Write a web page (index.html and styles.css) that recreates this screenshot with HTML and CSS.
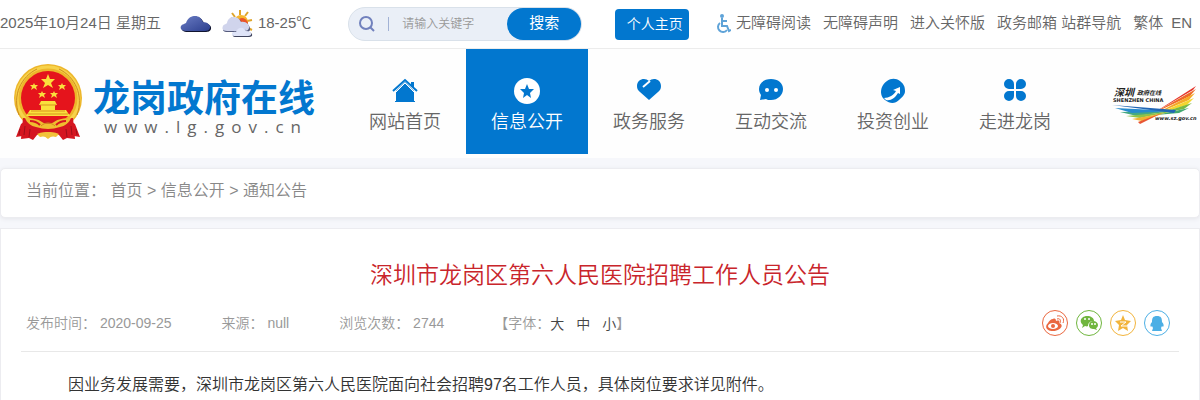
FILE: index.html
```html
<!DOCTYPE html>
<html lang="zh-CN">
<head>
    <meta charset="UTF-8">
    <meta name="viewport" content="width=device-width, initial-scale=1.0">
    <title>深圳市龙岗区第六人民医院招聘工作人员公告</title>
    <link rel="stylesheet" href="styles.css">
</head>
<body>
<!-- Top bar -->
<div class="topbar">
    <div class="date">2025年10月24日 星期五</div>
    <div class="weather">
        <svg class="cloud" width="32" height="18" viewBox="0 0 32 18">
            <defs>
                <linearGradient id="dark" x1="0" y1="0" x2="1" y2="1">
                    <stop offset="0" stop-color="#6a7cc4"/>
                    <stop offset="1" stop-color="#2c3f8e"/>
                </linearGradient>
            </defs>
            <path d="M8 17C3 17 1 15 2 12C3 10 6 10 7 9C9 3 12 2 16 2C20 2 22 4 24 8C28 8 32 11 31 14C30 17 27 17 24 17Z" fill="#10142f"/>
            <path d="M6 16C1 16 0 13 1 11C2 9 5 9 6 8C8 2 12 1 15 1C19 1 21 3 23 7C27 7 31 10 30 13C29 16 26 16 23 16Z" fill="url(#dark)"/>
        </svg>
        <svg width="32" height="30" viewBox="0 0 32 30">
            <g stroke="#dfa52c" stroke-width="2">
                <path d="M18 1v5M10 4l3 4M26 3l-3 4M30 11l-5 1M9 9l3 2M26 19l4 2"/>
            </g>
            <circle cx="19" cy="13" r="7" fill="#f7b52c"/>
            <path d="M17 10a6 6 0 0 1 9 6l-6 0z" fill="#e8542a"/>
            <path d="M6 23C1 23 0 21 2 18C3 16 6 16 6 15C7 10 10 9 13 9C17 9 19 12 20 14C25 13 28 17 28 20C28 23 26 23 23 23Z" fill="#555b7c"/>
            <path d="M5 22C0 22 0 19 1 17C2 15 5 15 5 14C6 9 9 8 12 8C16 8 18 11 19 13C24 12 28 16 27 19C26 22 24 22 22 22Z" fill="#d0d4ec"/>
            <path d="M13 28C9 28 11 23 15 24C17 18 24 19 25 23C31 23 32 28 27 28Z" fill="#40455f"/>
            <path d="M12 27C8 26 10 22 14 23C16 17 23 18 24 22C30 22 31 27 26 27Z" fill="#dfe4f8"/>
        </svg>
        <span>18-25℃</span>
    </div>
    <form class="search">
        <svg width="16" height="16" viewBox="0 0 16 16" fill="none" stroke="#7181bd" stroke-width="2">
            <circle cx="7" cy="7" r="6"/>
            <path d="M11 11l4 4"/>
        </svg>
        <input type="text" aria-label="请输入关键字" placeholder="请输入关键字">
        <button type="submit">搜索</button>
    </form>
    <button class="personal" type="button">个人主页</button>
    <div class="toplinks">
        <a class="access" href="#read">
            <svg width="15" height="20" viewBox="0 0 15 20" fill="none" stroke="#5fa3d8" stroke-width="2">
                <circle cx="6" cy="2" r="2" fill="#5fa3d8" stroke="none"/>
                <path d="M6 4v8h5l2 5 2-1M6 7h5"/>
                <path d="M4 9a5 5 0 1 0 7 7"/>
            </svg>无障碍阅读</a>
        <a href="#statement">无障碍声明</a>
        <a href="#care">进入关怀版</a>
        <span class="pair"><a href="#mail">政务邮箱</a> <a href="#sites">站群导航</a></span>
        <span class="lang"><a href="#hant">繁体</a><a href="#en">EN</a></span>
    </div>
</div>

<!-- Header -->
<div class="header">
    <a class="logo" href="#home">
        <svg width="70" height="76" viewBox="0 0 70 76">
            <circle cx="35" cy="34" r="34" fill="#edb62b"/>
            <circle cx="35" cy="34" r="31" fill="none" stroke="#f7d24a" stroke-width="3"/>
            <path d="M6 51C-1 31 8 13 24 5M64 51C71 31 62 13 46 5" fill="none" stroke="#ce8d1e" stroke-width="1"/>
            <circle cx="35" cy="34" r="27" fill="#e5141c"/>
            <g fill="#fae03c">
                <path d="M35 10l2 5h5l-4 4 2 5-5-3-5 3 2-5-4-4h5z"/>
                <path id="star" d="M21 19l1 2h3l-2 2 1 3-3-2-3 2 1-3-2-2h3z"/>
                <use href="#star" x="28"/>
                <use href="#star" x="8" y="8"/>
                <use href="#star" x="20" y="8"/>
                <path d="M26 41l2-4h14l2 4h-2v5h11l4 6H13l4-6h11v-5z"/>
            </g>
            <path d="M27 41h16M18 47h34M15 50h40" stroke="#d9941e" stroke-width="1"/>
            <path d="M10 54l14 1 11 2 11-2 14-1 2 21-8-1-4 2-4-5H24l-4 5-4-2-8 1z" fill="#d51620"/>
            <path d="M8 60L3 73l6-1 4 2 1-18zM62 60l5 13-6-1-4 2-1-18z" fill="#d51620"/>
            <path d="M12 54c7 0 13 1 17 4 3 2 9 2 12 0 4-3 10-4 17-4-2 5-6 8-11 9-4 1-8 2-12 2s-8-1-12-2c-5-1-9-4-11-9z" fill="#f0bd30"/>
            <path d="M17 57c5 0 8 2 10 4M53 57c-5 0-8 2-10 4" fill="none" stroke="#d51620" stroke-width="2"/>
            <path d="M24 70c5-2 8-2 11-2s6 0 11 2l-3 3c-3-1-5-1-8 2-3-3-5-3-8-2z" fill="#f2c33a"/>
            <path d="M28 62c4-4 10-4 14 0" fill="none" stroke="#cf8b1c" stroke-width="1"/>
            <path d="M12 62l-1 9M17 65l-1 8M53 65l1 8M58 62l1 9M7 65l-1 6M63 65l1 6" stroke="#9f0f19" stroke-width="1"/>
        </svg>
        <span class="logo-text">
            <span class="logo-name">龙岗政府在线</span>
            <span class="logo-url">www.lg.gov.cn</span>
        </span>
    </a>
    <nav class="nav">
        <a href="#index">
            <svg width="26" height="26" viewBox="0 0 26 26">
                <path d="M4 13l9-9 9 9v10h1v1H3v-1h1z" fill="#0277cf"/>
                <path d="M19 4h3v6l-3-3z" fill="#0277cf"/>
                <path d="M3 15L13 5l10 10" fill="none" stroke="#fff" stroke-width="1"/>
                <path d="M1 13L13 2l12 11" fill="none" stroke="#0277cf" stroke-width="2"/>
            </svg>
            网站首页</a>
        <a class="active" href="#info">
            <svg width="26" height="26" viewBox="0 0 26 26">
                <circle cx="13" cy="13" r="13" fill="#fff"/>
                <path d="M13 6l2 5 5 0-4 4 1 5-4-3-4 3 1-5-4-4 5 0z" fill="#0277cf"/>
            </svg>
            信息公开</a>
        <a href="#service">
            <svg width="26" height="26" viewBox="0 0 26 26">
                <path d="M13 3C17-1 25 1 25 8c0 3-1 4-3 6l-9 8-9-8C2 12 1 11 1 8 1 1 9-1 13 3z" fill="#0277cf"/>
                <path d="M14 3L7 9" stroke="#fff" stroke-width="2"/>
            </svg>
            政务服务</a>
        <a href="#talk">
            <svg width="26" height="26" viewBox="0 0 26 26">
                <path d="M13 1c7 0 12 4 12 10s-5 11-12 11c-2 0-4 0-5-1l-6 1 1-5c-1-2-2-3-2-6C1 5 6 1 13 1z" fill="#0277cf"/>
                <circle cx="9" cy="12" r="2" fill="#fff"/>
                <circle cx="18" cy="12" r="2" fill="#fff"/>
            </svg>
            互动交流</a>
        <a href="#invest">
            <svg width="26" height="26" viewBox="0 0 26 26">
                <path d="M7 3c4-3 9-3 13 0 4 3 5 6 5 10s-3 6-6 9c-4 4-9 4-14 0-4-3-5-8-3-13 1-2 2-4 5-6z" fill="#0277cf"/>
                <path d="M4 20c5 0 10-3 12-7l-3-1 7-3 0 7-2-1c-3 5-7 8-12 7z" fill="#fff"/>
            </svg>
            投资创业</a>
        <a href="#about">
            <svg width="26" height="26" viewBox="0 0 26 26" fill="#0277cf">
                <path d="M12 11V6a5 5 0 1 0-5 5zM14 11V6a5 5 0 1 1 5 5zM12 13v5a5 5 0 1 1-5-5zM14 13v5a5 5 0 1 0 5-5z"/>
            </svg>
            走进龙岗</a>
    </nav>
    <a class="sz" href="#sz">
        <svg width="86" height="42" viewBox="0 0 86 42">
            <g>
                <path d="M40 29L84 1 81 5z" fill="#e5352b"/>
                <path d="M40 29L84 4 78 11z" fill="#ef6a26"/>
                <path d="M41 30L83 8 77 15z" fill="#f5a927"/>
                <path d="M42 30L82 13 75 20z" fill="#f4d62e"/>
                <path d="M43 30L80 18 72 24z" fill="#78b943"/>
                <path d="M44 30L77 23 67 28z" fill="#42aa70"/>
                <path d="M8 27L60 26 25 31z" fill="#45a882"/>
                <path d="M14 31L57 27 28 33z" fill="#8dc349"/>
                <path d="M20 34L53 28 30 36z" fill="#f2b22f"/>
                <path d="M26 37L50 28 28 39z" fill="#e85533"/>
                <path d="M3 23L64 26 20 28z" fill="#278bce"/>
                <path d="M0 20L64 25 62 28z" fill="#2166b4"/>
            </g>
            <text class="sz-brush" x="2" y="11">深圳</text>
            <text class="sz-name" x="25" y="10">政府在线</text>
            <text class="sz-en" x="1" y="17">SHENZHEN CHINA</text>
            <text class="sz-url" x="43" y="35">www.sz.gov.cn</text>
        </svg>
    </a>
</div>

<!-- Breadcrumb -->
<div class="crumb">
    当前位置： <a href="#index">首页</a> &gt; <a href="#info">信息公开</a> &gt; <a href="#notice">通知公告</a>
</div>

<!-- Article -->
<div class="article">
    <h1>深圳市龙岗区第六人民医院招聘工作人员公告</h1>
    <div class="meta">
        <span>发布时间： 2020-09-25</span>
        <span>来源： null</span>
        <span>浏览次数： 2744</span>
        <span class="sizes">【字体：<button type="button">大</button><button type="button">中</button><button type="button">小</button>】</span>
        <div class="share">
            <a class="weibo" href="#weibo" aria-label="新浪微博">
                <svg width="18" height="18" viewBox="0 0 18 18">
                    <path d="M7 5c2-1 3 0 3 2 3-1 4 0 3 2 6 2 1 8-6 8-6 0-9-4-5-8 1-2 3-4 5-4z" fill="#ea6840"/>
                    <ellipse cx="7" cy="12" rx="5" ry="3" fill="#fff"/>
                    <circle cx="7" cy="12" r="2" fill="#ea6840"/>
                    <path d="M11 5c3-1 4 1 3 4M11 2c5-1 8 3 6 7" fill="none" stroke="#ea6840" stroke-width="1"/>
                </svg>
            </a>
            <a class="wechat" href="#wechat" aria-label="微信">
                <svg width="18" height="18" viewBox="0 0 18 18" fill="#70b63e">
                    <path d="M7 2c4 0 7 2 7 5-4 0-6 2-6 5-1 1-2 0-3 0l-3 2 1-3C-2 7 2 2 7 2z"/>
                    <path d="M13 7c3 0 5 2 5 4 0 1-1 3-2 3l1 2-3-1c-3 0-5-1-5-4 0-2 2-4 4-4z"/>
                    <g fill="#fff"><circle cx="5" cy="5" r="1"/><circle cx="9" cy="5" r="1"/><circle cx="12" cy="10" r="1"/><circle cx="15" cy="10" r="1"/></g>
                </svg>
            </a>
            <a class="qzone" href="#qzone" aria-label="QQ空间">
                <svg width="18" height="18" viewBox="0 0 18 18">
                    <path d="M9 1l2 5 6 1-4 4 1 6-5-3-5 3 1-6-4-4 6-1z" fill="#f2b43c"/>
                    <path d="M6 8h6l-5 4h6" fill="none" stroke="#fff" stroke-width="1"/>
                </svg>
            </a>
            <a class="qq" href="#qq" aria-label="QQ">
                <svg width="18" height="18" viewBox="0 0 18 18">
                    <path d="M9 2c4 0 5 2 5 6 2 2 2 4 1 5l-1-1-1 2 1 3-4 0-2 0-4 0 1-3-1-2-1 1c-1-1-1-3 1-5 0-4 1-6 5-6z" fill="#4cafe5"/>
                </svg>
            </a>
        </div>
    </div>
    <div class="content">
        <p>因业务发展需要，深圳市龙岗区第六人民医院面向社会招聘97名工作人员，具体岗位要求详见附件。</p>
    </div>
</div>
</body>
</html>
```
FILE: styles.css
```css
* {
    box-sizing: border-box;
}
body {
    margin: 0;
    background: #f6f7fb;
    color: #666;
    font-family: "Liberation Sans", "Noto Sans CJK SC", sans-serif;
    font-size: 15px;
    font-weight: 350;
}
a {
    color: inherit;
    text-decoration: none;
}
button, input {
    font-family: inherit;
    font-weight: inherit;
    border: none;
    padding: 0;
}
button {
    cursor: pointer;
}
svg {
    flex: none;
}

/* Top bar */
.topbar {
    display: flex;
    align-items: center;
    min-height: 49px;
    padding-right: 8px;
    background: #fff;
    border-bottom: 1px solid #ececec;
    white-space: nowrap;
}
.date, .weather span, .toplinks {
    line-height: 22px;
    padding-bottom: 2px;
}
.weather {
    display: flex;
    align-items: center;
    margin-left: 19px;
}
.cloud {
    margin-right: 10px;
}
.weather span {
    margin-left: 4px;
}
.search {
    display: flex;
    align-items: center;
    width: 234px;
    height: 34px;
    margin-left: 37px;
    padding-left: 10px;
    background: #eaeff7;
    border: 1px solid #d9e1ea;
    border-radius: 17px;
}
.search input {
    flex: 1;
    min-width: 0;
    height: 14px;
    margin-left: 13px;
    padding-left: 13px;
    border-left: 1px solid #a2b2d5;
    background: none;
    font-size: 12px;
    outline: none;
}
.search input::placeholder {
    color: #999;
}
.search button {
    width: 74px;
    height: 32px;
    padding-bottom: 6px;
    border-radius: 16px;
    background: #0277cf;
    color: #fff;
    font-size: 15px;
    font-weight: 400;
}
.personal {
    width: 74px;
    height: 31px;
    margin-left: 33px;
    padding: 0 0 2px 5px;
    border-radius: 4px;
    background: #0277cf;
    color: #fff;
    font-size: 14px;
}
.toplinks {
    display: flex;
    gap: 12px;
    margin-left: auto;
}
.access {
    display: flex;
    gap: 5px;
}
.access svg {
    margin-top: 2px;
}
.lang {
    display: flex;
    gap: 8px;
}

/* Header */
.header {
    display: flex;
    min-height: 109px;
    padding: 0 2px 4px 13px;
    background: #fefefe;
}
.logo {
    display: flex;
    align-items: center;
    gap: 10px;
    width: 331px;
}
.logo-text {
    display: flex;
    flex-direction: column;
    padding-top: 12px;
}
.logo-name {
    color: #0277cf;
    font-size: 37px;
    font-weight: 700;
    line-height: 38px;
}
.logo-url {
    padding-left: 11px;
    font-family: "Open Sans", sans-serif;
    font-size: 17px;
    font-weight: 400;
    letter-spacing: 7px;
    line-height: 16px;
}
.nav {
    display: flex;
}
.nav a {
    display: flex;
    flex-direction: column;
    align-items: center;
    gap: 4px;
    width: 122px;
    padding-top: 29px;
    font-size: 18px;
    line-height: 28px;
}
.nav .active {
    background: #0277cf;
    color: #fff;
}
.sz {
    display: flex;
    align-items: center;
    margin-left: auto;
    padding-top: 8px;
}
.sz text {
    fill: #222;
}
.sz-brush {
    font-size: 10px;
    font-weight: 700;
    font-style: italic;
}
.sz-name {
    font-size: 6px;
    font-weight: 700;
    font-style: italic;
}
.sz-en {
    font-family: "DejaVu Sans", sans-serif;
    font-size: 5px;
    font-weight: 700;
}
.sz-url {
    font-family: "DejaVu Sans", sans-serif;
    font-size: 5px;
    font-weight: 700;
    font-style: italic;
}

/* Breadcrumb */
.crumb {
    margin-top: 10px;
    padding: 10px 25px 14px;
    background: #fff;
    border: 1px solid #ececf0;
    border-radius: 5px;
    box-shadow: 0 1px 4px #e4e5ea;
    color: #888;
    font-size: 16px;
    line-height: 24px;
}

/* Article */
.article {
    margin-top: 10px;
    padding: 28px 20px 0;
    background: #fff;
    border: 1px solid #ececf0;
    border-bottom: none;
}
.article h1 {
    margin: 0;
    color: #c9252b;
    font-size: 23px;
    font-weight: 350;
    line-height: 36px;
    text-align: center;
}
.meta {
    display: flex;
    align-items: center;
    gap: 50px;
    margin-top: 10px;
    padding: 6px 9px 14px 5px;
    border-bottom: 1px solid #e8e8e8;
    color: #999;
    font-size: 14px;
    line-height: 28px;
}
.sizes {
    display: flex;
}
.sizes button {
    margin-right: 12px;
    background: none;
    color: #444;
    font-size: 14px;
}
.sizes button:last-child {
    margin-right: 0;
}
.share {
    display: flex;
    gap: 8px;
    margin-left: auto;
}
.share a {
    display: flex;
    align-items: center;
    justify-content: center;
    width: 26px;
    height: 26px;
    border: 1px solid;
    border-radius: 50%;
}
.weibo {
    color: #ea6840;
}
.wechat {
    color: #70b63e;
}
.qzone {
    color: #f2b43c;
}
.qq {
    color: #4cafe5;
}
.content {
    padding: 18px 15px 0;
    color: #333;
    font-size: 16px;
    line-height: 30px;
}
.content p {
    margin: 0;
    text-indent: 2em;
}
```
